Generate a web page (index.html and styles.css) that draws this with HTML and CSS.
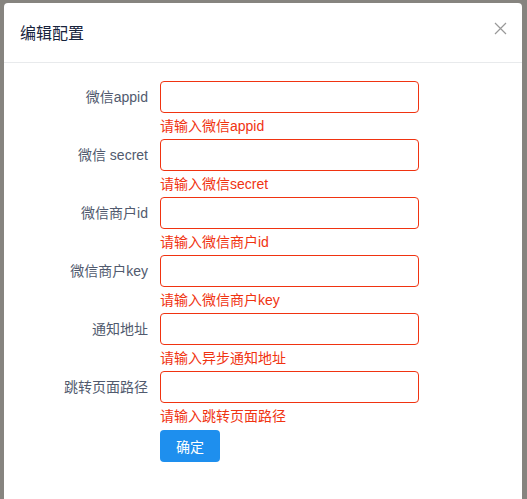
FILE: index.html
```html
<!DOCTYPE html>
<html lang="zh-CN">
<head>
    <meta charset="UTF-8">
    <meta name="viewport" content="width=device-width, initial-scale=1.0">
    <title>编辑配置</title>
    <link rel="stylesheet" href="styles.css">
</head>
<body>
    <div class="backdrop">
        <div class="modal">
            <div class="modal-header">
                <h3>编辑配置</h3>
                <span class="close">
                    <svg width="13" height="13" viewBox="0 0 13 13">
                        <path d="M1 1 L12 12 M12 1 L1 12" stroke="#999" stroke-width="1.2" fill="none"/>
                    </svg>
                </span>
            </div>
            <div class="modal-body">
                <form class="form">
                    <div class="form-item">
                        <label class="form-label">微信appid</label>
                        <div class="form-content">
                            <input type="text" class="input">
                            <div class="form-error">请输入微信appid</div>
                        </div>
                    </div>
                    <div class="form-item">
                        <label class="form-label">微信 secret</label>
                        <div class="form-content">
                            <input type="text" class="input">
                            <div class="form-error">请输入微信secret</div>
                        </div>
                    </div>
                    <div class="form-item">
                        <label class="form-label">微信商户id</label>
                        <div class="form-content">
                            <input type="text" class="input">
                            <div class="form-error">请输入微信商户id</div>
                        </div>
                    </div>
                    <div class="form-item">
                        <label class="form-label">微信商户key</label>
                        <div class="form-content">
                            <input type="text" class="input">
                            <div class="form-error">请输入微信商户key</div>
                        </div>
                    </div>
                    <div class="form-item">
                        <label class="form-label">通知地址</label>
                        <div class="form-content">
                            <input type="text" class="input">
                            <div class="form-error">请输入异步通知地址</div>
                        </div>
                    </div>
                    <div class="form-item">
                        <label class="form-label">跳转页面路径</label>
                        <div class="form-content">
                            <input type="text" class="input">
                            <div class="form-error">请输入跳转页面路径</div>
                        </div>
                    </div>
                    <div class="form-item">
                        <span class="form-label"></span>
                        <div class="form-content">
                            <button type="button" class="btn-primary">确定</button>
                        </div>
                    </div>
                </form>
            </div>
        </div>
    </div>
</body>
</html>
```

FILE: styles.css
```css
* {
    box-sizing: border-box;
}
html, body {
    margin: 0;
    height: 100%;
}
body {
    font-family: "Liberation Sans", "Noto Sans CJK SC", sans-serif;
    font-size: 14px;
    color: #515a6e;
    background: #86847f;
    overflow: hidden;
}
.backdrop {
    height: 100%;
    padding: 3px 5px 0 4px;
}
.modal {
    background: #fff;
    border-radius: 4px 4px 0 0;
    height: 100%;
}
.modal-header {
    height: 60px;
    border-bottom: 1px solid #e8eaec;
    padding: 0 15px 0 16px;
    display: flex;
    align-items: center;
    justify-content: space-between;
}
.modal-header h3 {
    margin: 0 0 2px 0;
    font-size: 16px;
    font-weight: normal;
    color: #17233c;
}
.close {
    display: flex;
    margin-bottom: 8px;
}
.modal-body {
    padding: 18px 16px 0 16px;
}
.form-item {
    display: flex;
}
.form-label {
    width: 140px;
    flex-shrink: 0;
    text-align: right;
    padding-right: 12px;
    line-height: 32px;
    color: #515a6e;
}
.form-content {
    width: 259px;
}
.input {
    display: block;
    width: 259px;
    height: 32px;
    border: 1px solid #f03311;
    border-radius: 4px;
    outline: none;
    font-size: 14px;
    padding: 4px 7px;
}
.form-error {
    color: #f03311;
    line-height: 26px;
    height: 26px;
    white-space: nowrap;
}
.btn-primary {
    margin-top: 1px;
    width: 60px;
    height: 32px;
    border: none;
    border-radius: 4px;
    background: #1e8fee;
    color: #fff;
    font-family: "Liberation Sans", "Noto Sans CJK SC", sans-serif;
    font-size: 14px;
    cursor: pointer;
}
```
